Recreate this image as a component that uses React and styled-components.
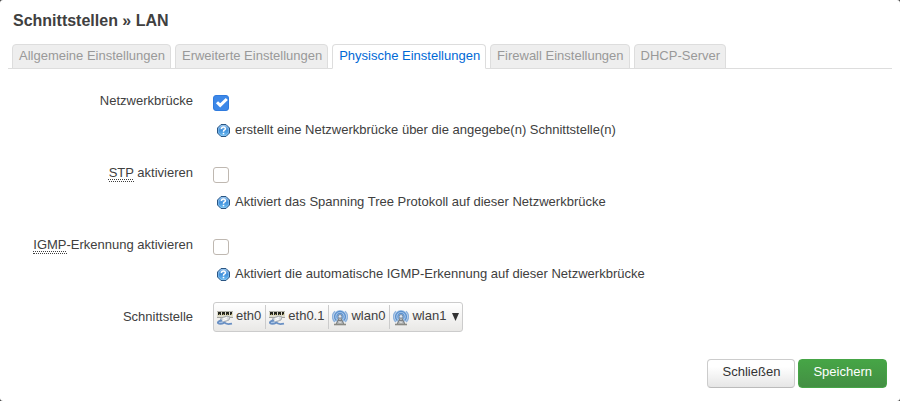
import React, { useState } from "react";
import styled, { createGlobalStyle, css } from "styled-components";

const GlobalStyle = createGlobalStyle`
body {
    margin:0;
    background-color:#404040;
    font-family:"Liberation Sans", Arial, sans-serif;
    font-size:13px;
    line-height:18px;
    color:#404040;
}
*, *::before, *::after {
    box-sizing:border-box;
}
`;
const Modal = styled.main`
background-color:#fff;
border-radius:3px;
padding:8px 8px 13px;
`;
const Title = styled.h1`
margin:0;
padding:0 5px;
font-size:16px;
line-height:26px;
`;
const TabMenu = styled.nav`
display:flex;
gap:4px;
margin-top:10px;
padding:0 4px;
border-bottom:1px solid #ddd;
`;
const Tab = styled.a`
height:25px;
margin-bottom:-1px;
padding:2px 5px 0 6px;
border:1px solid #ddd;
border-radius:4px 4px 0 0;
background-color:#eee;
color:#999;
text-decoration:none;
white-space:nowrap;
${({ $active }) => $active && css`
    background-color:#fff;
    border-bottom-color:#fff;
    color:#0069d6;
`}
`;
const Form = styled.form`
margin:0;
`;
const Fields = styled.div`
display:grid;
gap:19px;
padding-top:17px;
`;
const Row = styled.div`
display:grid;
grid-template-columns:185px 1fr;
column-gap:20px;
`;
const Label = styled.label`
padding-top:6px;
text-align:right;
`;
const Abbr = styled.abbr`
text-decoration:underline dotted 1px;
text-underline-offset:2px;
padding-bottom:1px;
border-bottom:1px dotted #404040;
`;
const CheckWrap = styled.div`
display:grid;
grid-template-columns:16px;
grid-template-rows:16px;
margin:9px 0 10px;
svg {
    grid-area:1 / 1;
    pointer-events:none;
}
`;
const Check = styled.input`
appearance:none;
grid-area:1 / 1;
width:16px;
height:16px;
margin:0;
border:1px solid #bfb8b1;
border-radius:3px;
background-color:#fff;
&:checked {
    border-color:#2f7bde;
    background-color:#3d88e8;
}
`;
const Help = styled.div`
display:flex;
gap:5px;
padding-left:4px;
svg {
    flex:none;
    margin-top:3px;
}
`;
const Dropdown = styled.button`
display:flex;
align-items:center;
justify-self:start;
height:30px;
padding:0 3px 0 0;
border:1px solid #ccc;
border-radius:3px;
background:linear-gradient(#fff, #e9e8e6);
color:#404040;
font:inherit;
`;
const Item = styled.span`
display:flex;
align-items:center;
gap:3px;
height:24px;
padding:0 4px 2px 3px;
border-right:1px solid #ccc;
&:last-of-type {
    border-right:none;
}
svg {
    margin-top:3px;
}
`;
const Arrow = styled.svg`
margin-left:2px;
`;
const Actions = styled.div`
display:flex;
justify-content:flex-end;
gap:3px;
padding:27px 5px 0;
`;
const Button = styled.button`
min-width:88px;
height:29px;
padding:0 14px 3px;
border:1px solid #ccc;
border-bottom-color:#bbb;
border-radius:4px;
background:linear-gradient(#fff, #fff 25%, #e6e6e6);
color:#333;
font:inherit;
${({ $save }) => $save && css`
    border-color:#46a546;
    background:linear-gradient(#46a546, #438f43);
    color:#fff;
`}
`;

const HelpIcon = () => (
    <svg width="13" height="13" viewBox="0 0 13 13" aria-hidden="true">
        <defs>
            <linearGradient id="help" x1="0" y1="0" x2="0" y2="1">
                <stop offset="0" stopColor="#8fbdea" />
                <stop offset="0.5" stopColor="#4392dc" />
                <stop offset="1" stopColor="#6dc0f5" />
            </linearGradient>
        </defs>
        <path d="M4 .5H9L12.5 4V9L9 12.5H4L.5 9V4Z" fill="url(#help)" stroke="#2a5582" />
        <path d="M4.3 1.5H8.7L11.5 4.3V8.7L8.7 11.5H4.3L1.5 8.7V4.3Z" fill="none" stroke="#a8d2f4" strokeOpacity=".45" />
        <path d="M4.5 5V4.2Q4.8 3 6.5 3T8.4 4.7Q8.4 5.6 7.2 6.2Q6.5 6.6 6.5 7.8" fill="none" stroke="#fff" strokeWidth="1.5" />
        <path d="M5.7 8.8H7.3V10.3H5.7Z" fill="#fff" />
    </svg>
)

const EthIcon = () => (
    <svg width="16" height="16" viewBox="0 0 16 16" aria-hidden="true">
        <path d="M0 1H16V7H0Z" fill="#dedccb" />
        <path d="M0 1.5H16" stroke="#b5b5ad" />
        <path d="M1 2H4V5H1ZM5 2H8V5H5ZM9 2H12V5H9ZM13 2H15V5H13Z" fill="#24241e" />
        <path d="M2 4.5H3M6 4.5H7M10 4.5H11M14 4.5H15" stroke="#a39a55" />
        <path d="M0 7.5H6M12 7.5H16" stroke="#a5a5a0" />
        <path d="M4 8L10 6L13 7L12 10L7 12L3 11Z" fill="#d9dbdd" stroke="#9aa1a8" strokeWidth=".8" />
        <path d="M6 9L10 7.5M6 10.5L10 9" stroke="#fff" />
        <path d="M5 10.5Q1 11 .8 12.8Q3 14.8 7.5 12.6Q9 14.8 15 13.6" fill="none" stroke="#6990c4" strokeWidth="1.8" />
        <path d="M2 12.6Q4 13 6 11.5" fill="none" stroke="#a5c5e9" />
    </svg>
)

const WlanIcon = () => (
    <svg width="16" height="16" viewBox="0 0 16 16" aria-hidden="true">
        <circle cx="8" cy="6.5" r="6.5" fill="#a9c8ea" />
        <path d="M3 12A7.2 7.2 0 0 1 3 1.2M13 12A7.2 7.2 0 0 0 13 1.2" fill="none" stroke="#8eb3de" strokeWidth="1.5" />
        <path d="M4.3 10.4A5.2 5.2 0 0 1 5 2.2Q8 .6 11 2.2A5.2 5.2 0 0 1 11.7 10.4" fill="none" stroke="#5b90cd" strokeWidth="1.3" />
        <path d="M5.6 8.6A3.2 3.2 0 0 1 8 3.4A3.2 3.2 0 0 1 10.4 8.6" fill="none" stroke="#5b90cd" strokeWidth="1.1" />
        <circle cx="8" cy="6.4" r="1.8" fill="#dfe8f2" stroke="#6b7f96" strokeWidth=".8" />
        <path d="M7 8H9L12 14H4Z" fill="#b9bcbd" />
        <path d="M7.2 8L4.2 14M8.8 8L11.8 14M6 10.5H10" fill="none" stroke="#7c8084" strokeWidth="1.1" />
        <path d="M7 11.5L8.5 13" stroke="#f2f2f2" />
        <path d="M2 14.5H14" stroke="#8a8a84" strokeWidth="1.6" />
    </svg>
)

function CheckField ({ id, label, help, checked, onChange }) {
    return (
        <Row>
            <Label htmlFor={id}>{label}</Label>
            <div>
                <CheckWrap>
                    <Check type="checkbox" id={id} checked={checked} onChange={onChange} aria-describedby={id + "-help"} />
                    {checked && (
                        <svg width="16" height="16" viewBox="0 0 16 16" aria-hidden="true">
                            <path d="M4 7.2L7.2 10.4L13.8 4" fill="none" stroke="#fff" strokeWidth="3" />
                        </svg>
                    )}
                </CheckWrap>
                <Help id={id + "-help"}><HelpIcon />{help}</Help>
            </div>
        </Row>
    )
}

const TABS = ["Allgemeine Einstellungen", "Erweiterte Einstellungen", "Physische Einstellungen", "Firewall Einstellungen", "DHCP-Server"]
const DEVICES = [["eth0", EthIcon], ["eth0.1", EthIcon], ["wlan0", WlanIcon], ["wlan1", WlanIcon]]

const App = () => {
    const [tab, setTab] = useState(2);
    const [values, setValues] = useState({ bridge: true, stp: false, igmp: false });

    const toggle = (name) => () => setValues({ ...values, [name]: !values[name] })
    const selectTab = (e, i) => {
        e.preventDefault()
        setTab(i)
    }

    return (
        <>
            <GlobalStyle />
            <Modal>
                <Title>Schnittstellen » LAN</Title>
                <TabMenu>
                    {TABS.map((name, i) => (
                        <Tab key={name} href="#" $active={i === tab} onClick={(e) => selectTab(e, i)}>{name}</Tab>
                    ))}
                </TabMenu>
                <Form onSubmit={(e) => e.preventDefault()}>
                    <Fields>
                        <CheckField
                            id="bridge"
                            label="Netzwerkbrücke"
                            help="erstellt eine Netzwerkbrücke über die angegebe(n) Schnittstelle(n)"
                            checked={values.bridge}
                            onChange={toggle("bridge")}
                        />
                        <CheckField
                            id="stp"
                            label={<><Abbr>STP</Abbr> aktivieren</>}
                            help="Aktiviert das Spanning Tree Protokoll auf dieser Netzwerkbrücke"
                            checked={values.stp}
                            onChange={toggle("stp")}
                        />
                        <CheckField
                            id="igmp"
                            label={<><Abbr>IGMP</Abbr>-Erkennung aktivieren</>}
                            help="Aktiviert die automatische IGMP-Erkennung auf dieser Netzwerkbrücke"
                            checked={values.igmp}
                            onChange={toggle("igmp")}
                        />
                        <Row>
                            <Label htmlFor="ifname">Schnittstelle</Label>
                            <Dropdown type="button" id="ifname" aria-haspopup="listbox">
                                {DEVICES.map(([name, Icon]) => <Item key={name}><Icon />{name}</Item>)}
                                <Arrow width="7" height="8" viewBox="0 0 7 8" aria-hidden="true">
                                    <path d="M0 0H7L3.5 8Z" fill="#333" />
                                </Arrow>
                            </Dropdown>
                        </Row>
                    </Fields>
                    <Actions>
                        <Button type="button">Schließen</Button>
                        <Button type="submit" $save>Speichern</Button>
                    </Actions>
                </Form>
            </Modal>
        </>
    )
}
export default App
